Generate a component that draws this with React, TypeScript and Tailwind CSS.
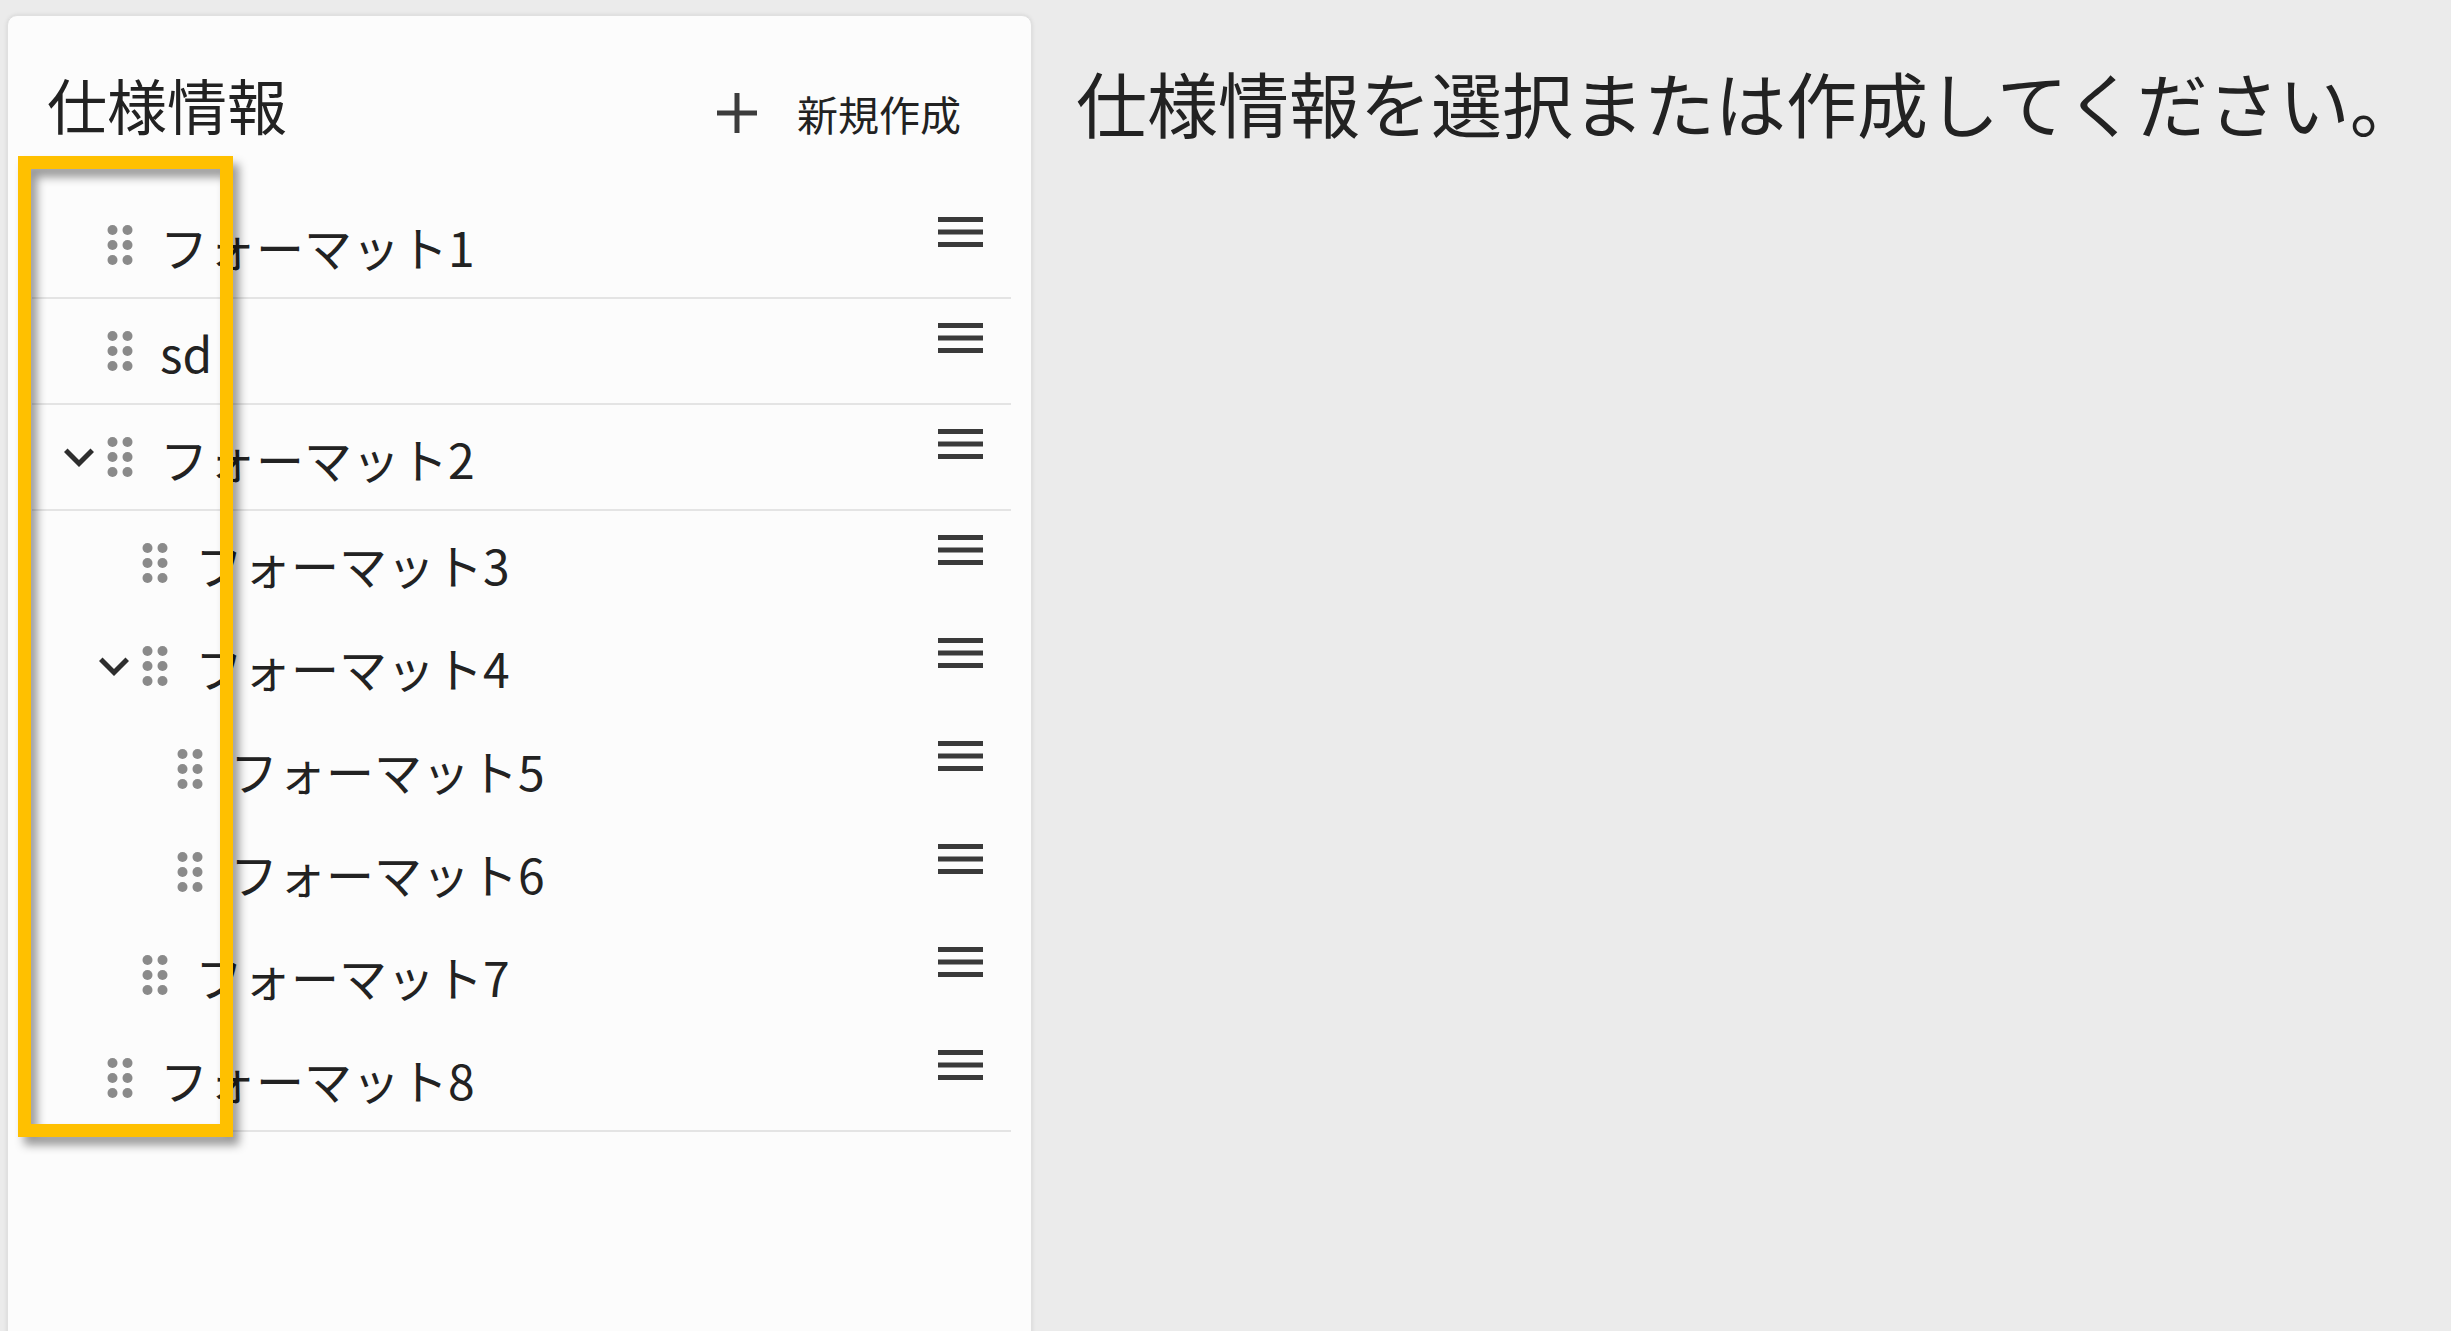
import type { ReactNode } from "react";
import { clsx } from "clsx";

type Node = { label: string; children?: Node[] };

const tree: Node[] = [
  { label: "フォーマット1" },
  { label: "sd" },
  {
    label: "フォーマット2",
    children: [
      { label: "フォーマット3" },
      {
        label: "フォーマット4",
        children: [{ label: "フォーマット5" }, { label: "フォーマット6" }],
      },
      { label: "フォーマット7" },
    ],
  },
  { label: "フォーマット8" },
];

// left padding for each nesting level (35px per step)
const indent = ["pl-[27px]", "pl-[62px]", "pl-[97px]"];

const font = "font-['Noto_Sans_CJK_JP','Noto_Sans',sans-serif]";

function ExpandIcon() {
  return (
    <svg width="40" height="40" viewBox="4 4 16 16" className="fill-[#2e2e2e]">
      <path d="M16.59 8.59 12 13.17 7.41 8.59 6 10l6 6 6-6z" />
    </svg>
  );
}

function DragIcon() {
  return (
    <svg width="40" height="40" viewBox="4 4 16 16" className="ml-px fill-[#8a8a8a]">
      <circle cx="9" cy="6" r="2" />
      <circle cx="15" cy="6" r="2" />
      <circle cx="9" cy="12" r="2" />
      <circle cx="15" cy="12" r="2" />
      <circle cx="9" cy="18" r="2" />
      <circle cx="15" cy="18" r="2" />
    </svg>
  );
}

function MenuIcon() {
  return (
    <svg
      width="45"
      height="60"
      viewBox="3 0 18 24"
      className="ml-auto mt-[9px] self-start fill-[#3a3a3a]"
    >
      <path d="M3 18h18v-2H3v2zm0-5h18v-2H3v2zm0-7v2h18V6H3z" />
    </svg>
  );
}

function PlusIcon() {
  return (
    <svg width="42" height="42" viewBox="0 0 42 42" className="stroke-[#3c3c3c]">
      <path d="M21 1v40M1 21h40" strokeWidth="5" />
    </svg>
  );
}

function TreeItem({ node, level }: { node: Node; level: number }) {
  const hasChildren = !!node.children?.length;
  return (
    <>
      <div
        className={clsx(
          "flex items-center pr-[28px]",
          level === 0 ? "h-[106px] border-b-2 border-[#e4e4e4]" : "h-[103px]",
          indent[level],
        )}
      >
        <span className="flex w-[40px] justify-center">{hasChildren && <ExpandIcon />}</span>
        <DragIcon />
        <span className="ml-[20px] mt-[2px] text-[48px] leading-none text-[#222]">{node.label}</span>
        <MenuIcon />
      </div>
      {node.children?.map((c) => (
        <TreeItem key={c.label} node={c} level={level + 1} />
      ))}
    </>
  );
}

function Panel({ children }: { children: ReactNode }) {
  return (
    <div className="ml-[7px] mt-[15px] flex h-[1340px] w-[1025px] shrink-0 flex-col rounded-t-[10px] border border-[#e0e0e0] bg-[#fcfcfc] shadow-[0_0_4px_rgba(0,0,0,0.1)]">
      {children}
    </div>
  );
}

export default function App() {
  return (
    <div className={clsx("relative flex h-screen w-full overflow-hidden bg-[#ebebeb]", font)}>
      <Panel>
        <div className="flex h-[177px] items-start justify-between pl-[39px] pr-[70px] pt-[58px]">
          <h2 className="text-[60px] font-normal leading-[60px] text-[#222]">仕様情報</h2>
          <button type="button" className="mt-[18px] flex items-center gap-[39px] text-[41px] leading-[41px] text-[#222]">
            <PlusIcon />
            新規作成
          </button>
        </div>
        <div className="ml-[24px] mr-[20px]">
          {tree.map((n) => (
            <TreeItem key={n.label} node={n} level={0} />
          ))}
        </div>
      </Panel>

      <div className="flex-1 pl-[44px] pt-[66px]">
        <p className="text-[71px] leading-[71px] text-[#222]">仕様情報を選択または作成してください。</p>
      </div>

      {/* highlight frame over the drag handles */}
      <div className="pointer-events-none absolute left-[18px] top-[156px] h-[981px] w-[215px] border-[13px] border-[#ffc000] drop-shadow-[6px_8px_5px_rgba(0,0,0,0.4)]" />
    </div>
  );
}
